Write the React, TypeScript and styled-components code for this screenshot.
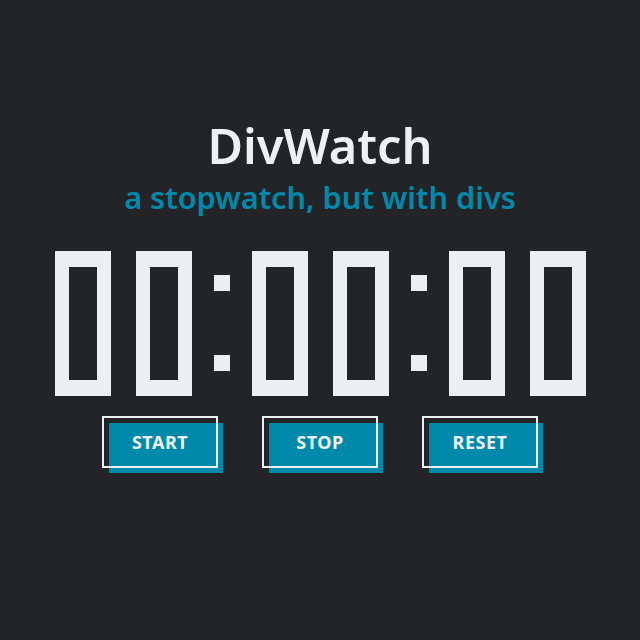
import styled, { createGlobalStyle } from 'styled-components';

const GlobalStyle = createGlobalStyle`
  html, body {
    margin: 0;
    padding: 0;
    background: #232428;
  }
  body {
    font-family: 'Noto Sans', 'Open Sans', sans-serif;
  }
`;

const Page = styled.div`
  width: 640px;
  height: 640px;
  display: flex;
  flex-direction: column;
  align-items: center;
  padding-top: 115px;
  box-sizing: border-box;
`;

const Title = styled.h1`
  margin: 0;
  font-size: 48.7px;
  line-height: 60px;
  font-weight: 600;
  color: #eef1f3;
`;

const Subtitle = styled.h2`
  margin: 2px 0 0;
  font-size: 30.7px;
  line-height: 40px;
  font-weight: 600;
  color: #0089aa;
`;

const Clock = styled.div`
  display: flex;
  align-items: flex-start;
  margin-top: 34px;
`;

const Pair = styled.div`
  display: flex;
  gap: 25px;
`;

const DigitBox = styled.div`
  display: flex;
  width: 56px;
  height: 145px;
`;

const Side = styled.div`
  display: flex;
  flex-direction: column;
  width: 14px;
`;

const Middle = styled.div`
  display: flex;
  flex-direction: column;
  justify-content: space-between;
  width: 28px;
`;

const VSeg = styled.div<{ $on: boolean }>`
  height: 72.5px;
  background: ${p => (p.$on ? '#eceff0' : 'transparent')};
`;

const HSeg = styled.div<{ $on: boolean }>`
  height: 16px;
  background: ${p => (p.$on ? '#eceff0' : 'transparent')};
`;

const Colon = styled.div`
  display: flex;
  flex-direction: column;
  gap: 64px;
  width: 16px;
  margin: 24px 22px 0;
`;

const Dot = styled.div`
  width: 16px;
  height: 16px;
  background: #eceff0;
`;

const Buttons = styled.div`
  display: flex;
  gap: 44px;
  margin-top: 20px;
`;

const Button = styled.button`
  position: relative;
  isolation: isolate;
  width: 116px;
  height: 52px;
  border: none;
  background: transparent;
  color: #eef1f3;
  font-family: 'Noto Sans', 'Open Sans', sans-serif;
  font-weight: 700;
  font-size: 18px;
  letter-spacing: 0.5px;
  padding: 0;
  cursor: pointer;

  /* offset teal block behind the label */
  &::before {
    content: '';
    position: absolute;
    left: 7px;
    top: 7px;
    width: 114px;
    height: 50px;
    background: #0089aa;
    z-index: -1;
  }

  /* white outline drawn on top of the teal block */
  &::after {
    content: '';
    position: absolute;
    inset: 0;
    border: 2px solid #eceff0;
    z-index: 1;
    pointer-events: none;
  }
`;

// segments: a top, b top-right, c bottom-right, d bottom, e bottom-left, f top-left, g middle
const SEGMENTS: Record<string, string> = {
  '0': 'abcdef',
  '1': 'bc',
  '2': 'abdeg',
  '3': 'abcdg',
  '4': 'bcfg',
  '5': 'acdfg',
  '6': 'acdefg',
  '7': 'abc',
  '8': 'abcdefg',
  '9': 'abcdfg',
};

function Digit({ value }: { value: string }) {
  const on = SEGMENTS[value] || '';
  return (
    <DigitBox>
      <Side>
        <VSeg $on={on.includes('f')} />
        <VSeg $on={on.includes('e')} />
      </Side>
      <Middle>
        <HSeg $on={on.includes('a')} />
        <HSeg $on={on.includes('g')} />
        <HSeg $on={on.includes('d')} />
      </Middle>
      <Side>
        <VSeg $on={on.includes('b')} />
        <VSeg $on={on.includes('c')} />
      </Side>
    </DigitBox>
  );
}

function DigitPair({ value }: { value: number }) {
  const s = String(value).padStart(2, '0');
  return (
    <Pair>
      <Digit value={s[0]} />
      <Digit value={s[1]} />
    </Pair>
  );
}

function Separator() {
  return (
    <Colon>
      <Dot />
      <Dot />
    </Colon>
  );
}

export default function App() {
  const hours = 0;
  const minutes = 0;
  const seconds = 0;
  return (
    <Page>
      <GlobalStyle />
      <Title>DivWatch</Title>
      <Subtitle>a stopwatch, but with divs</Subtitle>
      <Clock>
        <DigitPair value={hours} />
        <Separator />
        <DigitPair value={minutes} />
        <Separator />
        <DigitPair value={seconds} />
      </Clock>
      <Buttons>
        <Button>START</Button>
        <Button>STOP</Button>
        <Button>RESET</Button>
      </Buttons>
    </Page>
  );
}
